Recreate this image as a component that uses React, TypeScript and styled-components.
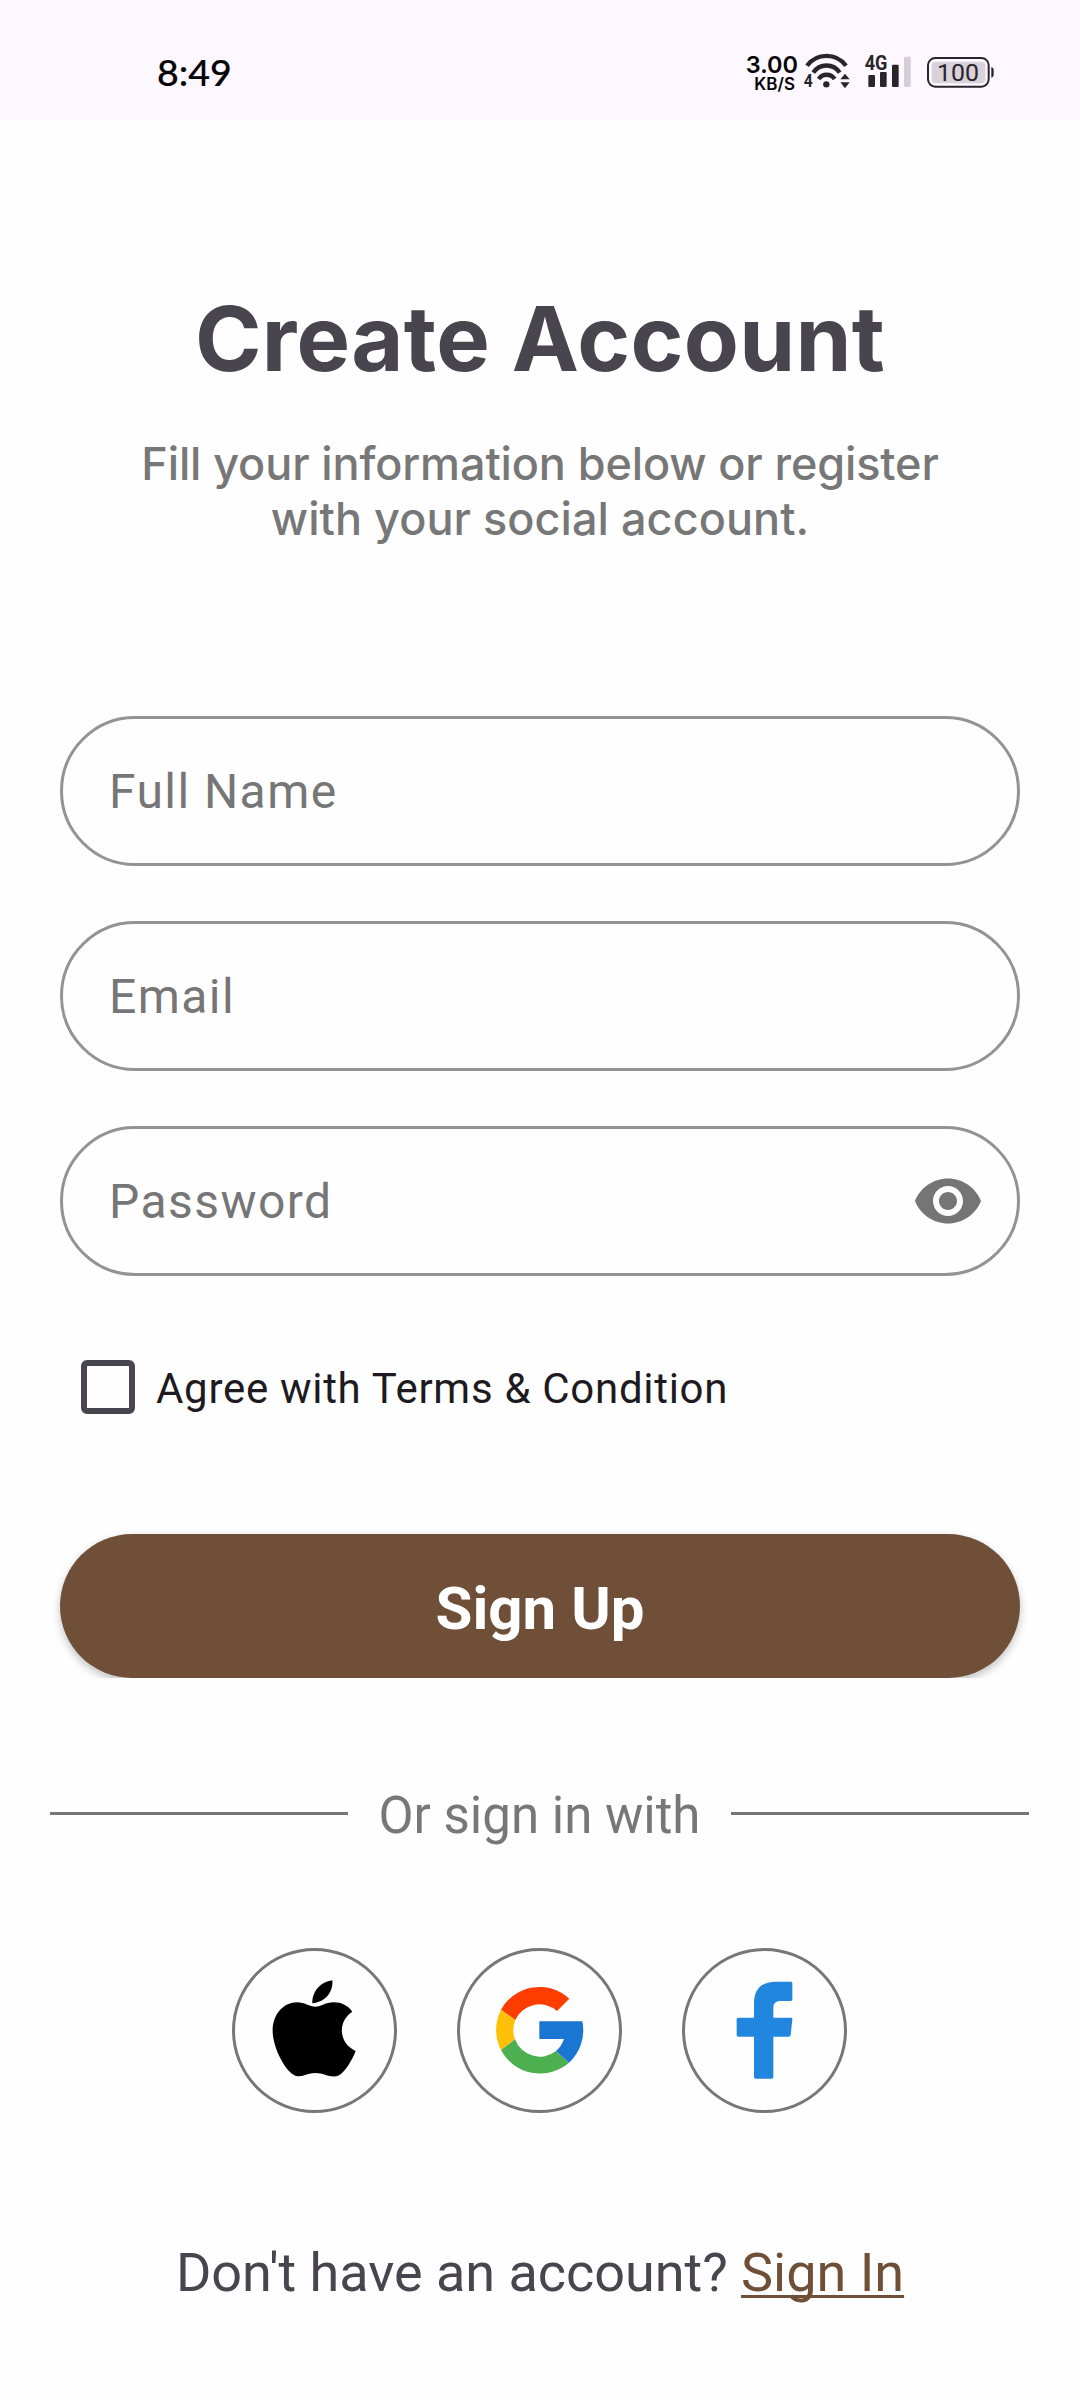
import React from "react";
import styled, { createGlobalStyle } from "styled-components";

const GlobalStyle = createGlobalStyle`
  * { box-sizing: border-box; }
  body { margin: 0; background: #fefefe; }
`;

const Screen = styled.div`
  width: 1080px;
  height: 2400px;
  overflow: hidden;
  display: flex;
  flex-direction: column;
  background: #fefefe;
  font-family: Roboto, sans-serif;
`;

const StatusBar = styled.header`
  height: 120px;
  flex: none;
  padding: 52px 86px 0 157px;
  display: flex;
  justify-content: space-between;
  align-items: flex-start;
  background: #fdf7ff;
`;

const Clock = styled.time`
  margin-top: -1px;
  font: 500 37.5px/42px Lato, sans-serif;
  -webkit-text-stroke: 0.2px #050505;
  color: #050505;
`;

const StatusIcons = styled.div`
  display: flex;
  align-items: flex-start;
`;

const NetSpeed = styled.div`
  width: 58px;
  display: flex;
  flex-direction: column;
  align-items: flex-end;
  padding-right: 5px;
  color: #050505;
`;

const SpeedLine = styled.span<{ $size: number; $height: number; $end?: number }>`
  font: 600 ${(p) => p.$size}px/${(p) => p.$height}px Inter, sans-serif;
  margin-right: ${(p) => p.$end ?? 0}px;
  white-space: nowrap;
`;

const Glyph = styled.svg<{ $gap?: number }>`
  display: block;
  flex: none;
  margin-right: ${(p) => p.$gap ?? 0}px;
  overflow: visible;
`;

const Content = styled.main`
  flex: 1;
  display: flex;
  flex-direction: column;
`;

const Title = styled.h1`
  margin: 164px 0 0;
  text-align: center;
  font: 700 90px/110px Inter, sans-serif;
  letter-spacing: 0.3px;
  color: #49454f;
`;

const Subtitle = styled.p`
  margin: 42px 0 0;
  display: flex;
  flex-direction: column;
  align-items: center;
  font: 500 45px/55px Inter, sans-serif;
  color: #777;
`;

const SubtitleLine = styled.span<{ $spacing: number }>`
  letter-spacing: ${(p) => p.$spacing}px;
`;

const Form = styled.form`
  margin: 170px 60px 0;
  display: flex;
  flex-direction: column;
`;

const Fields = styled.div`
  display: flex;
  flex-direction: column;
  gap: 55px;
`;

const Field = styled.label`
  height: 150px;
  padding: 0 33px 0 46px;
  display: flex;
  align-items: center;
  justify-content: space-between;
  border: 3px solid #939393;
  border-radius: 75px;
  font-size: 48px;
  line-height: 56px;
  letter-spacing: 1.44px;
  color: #767676;
`;

const FieldLabel = styled.span`
  padding-top: 2px;
`;

const Agree = styled.label`
  margin: 81px 0 0 21px;
  height: 60px;
  display: flex;
  align-items: center;
  gap: 21px;
  font-size: 42px;
  line-height: 60px;
  letter-spacing: 0.7px;
  color: #1d1b20;
`;

const AgreeText = styled.span`
  padding-top: 3px;
`;

const CheckBox = styled.span`
  width: 54px;
  height: 54px;
  border: 6px solid #49454f;
  border-radius: 6px;
`;

const ButtonClip = styled.div`
  margin: 107px -20px 0;
  padding: 10px 20px 0;
  overflow: hidden;
`;

const SubmitButton = styled.button`
  display: block;
  width: 100%;
  height: 144px;
  padding: 6px 0 0;
  border: 0;
  border-radius: 72px;
  background: #6f4f38;
  box-shadow: 0 4px 9px rgba(0, 0, 0, 0.24);
  color: #fff;
  font: 700 60px/70px Roboto, sans-serif;
`;

const Divider = styled.div`
  margin: 104px 51px 0 50px;
  height: 60px;
  display: flex;
  align-items: center;
  color: #777;
  font-size: 51px;
  line-height: 66px;
`;

const Rule = styled.span`
  flex: 1;
  height: 3px;
  margin-top: 2px;
  background: #777;
`;

const DividerText = styled.span`
  width: 383px;
  margin-top: 8px;
  text-align: center;
`;

const Socials = styled.div`
  margin: 106px 1px 0 0;
  display: flex;
  justify-content: center;
  gap: 60px;
`;

const SocialButton = styled.button`
  width: 165px;
  height: 165px;
  padding: 0;
  border: 3px solid #777;
  border-radius: 50%;
  background: #fefefe;
  display: flex;
  align-items: center;
  justify-content: center;
`;

const Footer = styled.p`
  margin: 128px 0 0;
  text-align: center;
  font-size: 54px;
  line-height: 64px;
  letter-spacing: -0.03px;
  color: #49454f;
`;

const FooterLink = styled.a`
  color: #6f4f38;
  text-decoration: underline;
  text-decoration-thickness: 3px;
  text-decoration-skip-ink: none;
  text-underline-offset: 4px;
`;

const INK = "#28262a";

const WifiIcon = () => (
  <Glyph $gap={14} width="48" height="38" viewBox="252 66 144 114">
    <g fill="none" stroke={INK} strokeWidth="13">
      <path d="M264 107A72.6 72.6 0 0 1 381 107" />
      <path d="M283 128A47 47 0 0 1 362 128" />
      <path d="M299 147A29 29 0 0 1 347 147" />
    </g>
    <circle cx="322" cy="163" r="9.5" fill={INK} />
    <path d="M378 131L392 148H364ZM364 157H392L378 175Z" fill={INK} />
    <text x="254" y="171" fontFamily="Roboto, sans-serif" fontWeight="700" fontSize="53" fill={INK} textLength="27" lengthAdjust="spacingAndGlyphs">4</text>
  </Glyph>
);

const SignalIcon = () => (
  <Glyph $gap={16} width="46" height="38" viewBox="436 66 138 114">
    <path d="M446 138q0-3 3-3h14q3 0 3 3v30q0 3-3 3h-14q-3 0-3-3ZM481 129q0-3 3-3h14q3 0 3 3v39q0 3-3 3h-14q-3 0-3-3ZM517 107q0-3 3-3h14q3 0 3 3v61q0 3-3 3h-14q-3 0-3-3Z" fill={INK} />
    <rect x="553" y="80" width="20" height="91" rx="3" fill="#d5ced8" />
    <text x="435" y="120" fontFamily="Roboto, sans-serif" fontWeight="700" fontSize="60" fill={INK} stroke="#fdf7ff" strokeWidth="6" paintOrder="stroke" textLength="68" lengthAdjust="spacingAndGlyphs">4G</text>
  </Glyph>
);

const BatteryIcon = () => (
  <Glyph width="67" height="38" viewBox="621 66 201 114">
    <rect x="624" y="84" width="182" height="86" rx="22" fill="none" stroke={INK} strokeWidth="6" />
    <rect x="635" y="95" width="161" height="65" rx="12" fill="#d9d2da" />
    <path d="M814 111q7 2 7 8v16q0 6-7 8Z" fill={INK} />
    <text x="714" y="153" textAnchor="middle" fontFamily="Roboto, sans-serif" fontSize="71" fill={INK} textLength="126" lengthAdjust="spacingAndGlyphs">100</text>
  </Glyph>
);

const EyeIcon = () => (
  <Glyph width="72" height="72" viewBox="0 0 24 24">
    <path fill="#757575" d="M12 4.5C7 4.5 2.73 7.61 1 12c1.73 4.39 6 7.5 11 7.5s9.27-3.11 11-7.5c-1.73-4.39-6-7.5-11-7.5zM12 17c-2.76 0-5-2.24-5-5s2.24-5 5-5 5 2.24 5 5-2.24 5-5 5zm0-8c-1.66 0-3 1.34-3 3s1.34 3 3 3 3-1.34 3-3-1.34-3-3-3z" />
  </Glyph>
);

/* The three brand marks share a 159px canvas, drawn at three units per pixel. */
const AppleLogo = () => (
  <Glyph width="159" height="159" viewBox="45 63 477 477">
    <path d="M337 151C340 184 318 216 277 220C275 187 300 156 337 151Z" />
    <path d="M286 230C305 230 315 217 342 217C364 217 384 227 397 245C354 272 353 338 407 363C397 390 374 427 357 436C334 447 314 429 286 429C261 429 247 443 226 437C197 427 158 352 158 303C158 250 193 217 231 217C253 217 269 230 286 230Z" />
  </Glyph>
);

const GoogleLogo = () => (
  <Glyph width="159" height="159" viewBox="720 63 477 477">
    <path fill="#ff3d00" d="M843 239A132 132 0 0 1 1048 206L1011 243A79 79 0 0 0 886 270Z" />
    <path fill="#ffc107" d="M843 239A132 132 0 0 0 843 360L885 328A79 79 0 0 1 886 270Z" />
    <path fill="#4caf50" d="M843 360A132 132 0 0 0 1047 398L1008 363A79 79 0 0 1 885 328Z" />
    <path fill="#1976d2" d="M958 274H1087A132 132 0 0 1 1047 398L1008 363Q1025 349 1032 327H958Z" />
  </Glyph>
);

const FacebookLogo = () => (
  <Glyph width="159" height="159" viewBox="135 63 477 477">
    <path fill="#2086de" d="M347 446Q342 446 342 441V320H295Q290 320 290 315V268Q290 263 295 263H342V220C342 177 365 155 407 155H453Q457 155 457 160V208Q457 213 452 213H420Q400 213 400 233V263H452Q458 263 457 269L452 315Q451 320 446 320H400V441Q400 446 395 446Z" />
  </Glyph>
);

export default function App() {
  return (
    <>
      <GlobalStyle />
      <Screen>
        <StatusBar>
          <Clock>8:49</Clock>
          <StatusIcons>
            <NetSpeed>
              <SpeedLine $size={23.5} $height={26}>3.00</SpeedLine>
              <SpeedLine $size={17} $height={13} $end={3}>KB/S</SpeedLine>
            </NetSpeed>
            <WifiIcon />
            <SignalIcon />
            <BatteryIcon />
          </StatusIcons>
        </StatusBar>
        <Content>
          <Title>Create Account</Title>
          <Subtitle>
            <SubtitleLine $spacing={-0.12}>Fill your information below or register</SubtitleLine>
            <SubtitleLine $spacing={0.05}>with your social account.</SubtitleLine>
          </Subtitle>
          <Form>
            <Fields>
              <Field><FieldLabel>Full Name</FieldLabel></Field>
              <Field><FieldLabel>Email</FieldLabel></Field>
              <Field>
                <FieldLabel>Password</FieldLabel>
                <EyeIcon />
              </Field>
            </Fields>
            <Agree>
              <CheckBox />
              <AgreeText>Agree with Terms &amp; Condition</AgreeText>
            </Agree>
            <ButtonClip>
              <SubmitButton type="button">Sign Up</SubmitButton>
            </ButtonClip>
          </Form>
          <Divider>
            <Rule />
            <DividerText>Or sign in with</DividerText>
            <Rule />
          </Divider>
          <Socials>
            <SocialButton aria-label="Apple"><AppleLogo /></SocialButton>
            <SocialButton aria-label="Google"><GoogleLogo /></SocialButton>
            <SocialButton aria-label="Facebook"><FacebookLogo /></SocialButton>
          </Socials>
          <Footer>
            Don't have an account? <FooterLink>Sign In</FooterLink>
          </Footer>
        </Content>
      </Screen>
    </>
  );
}
